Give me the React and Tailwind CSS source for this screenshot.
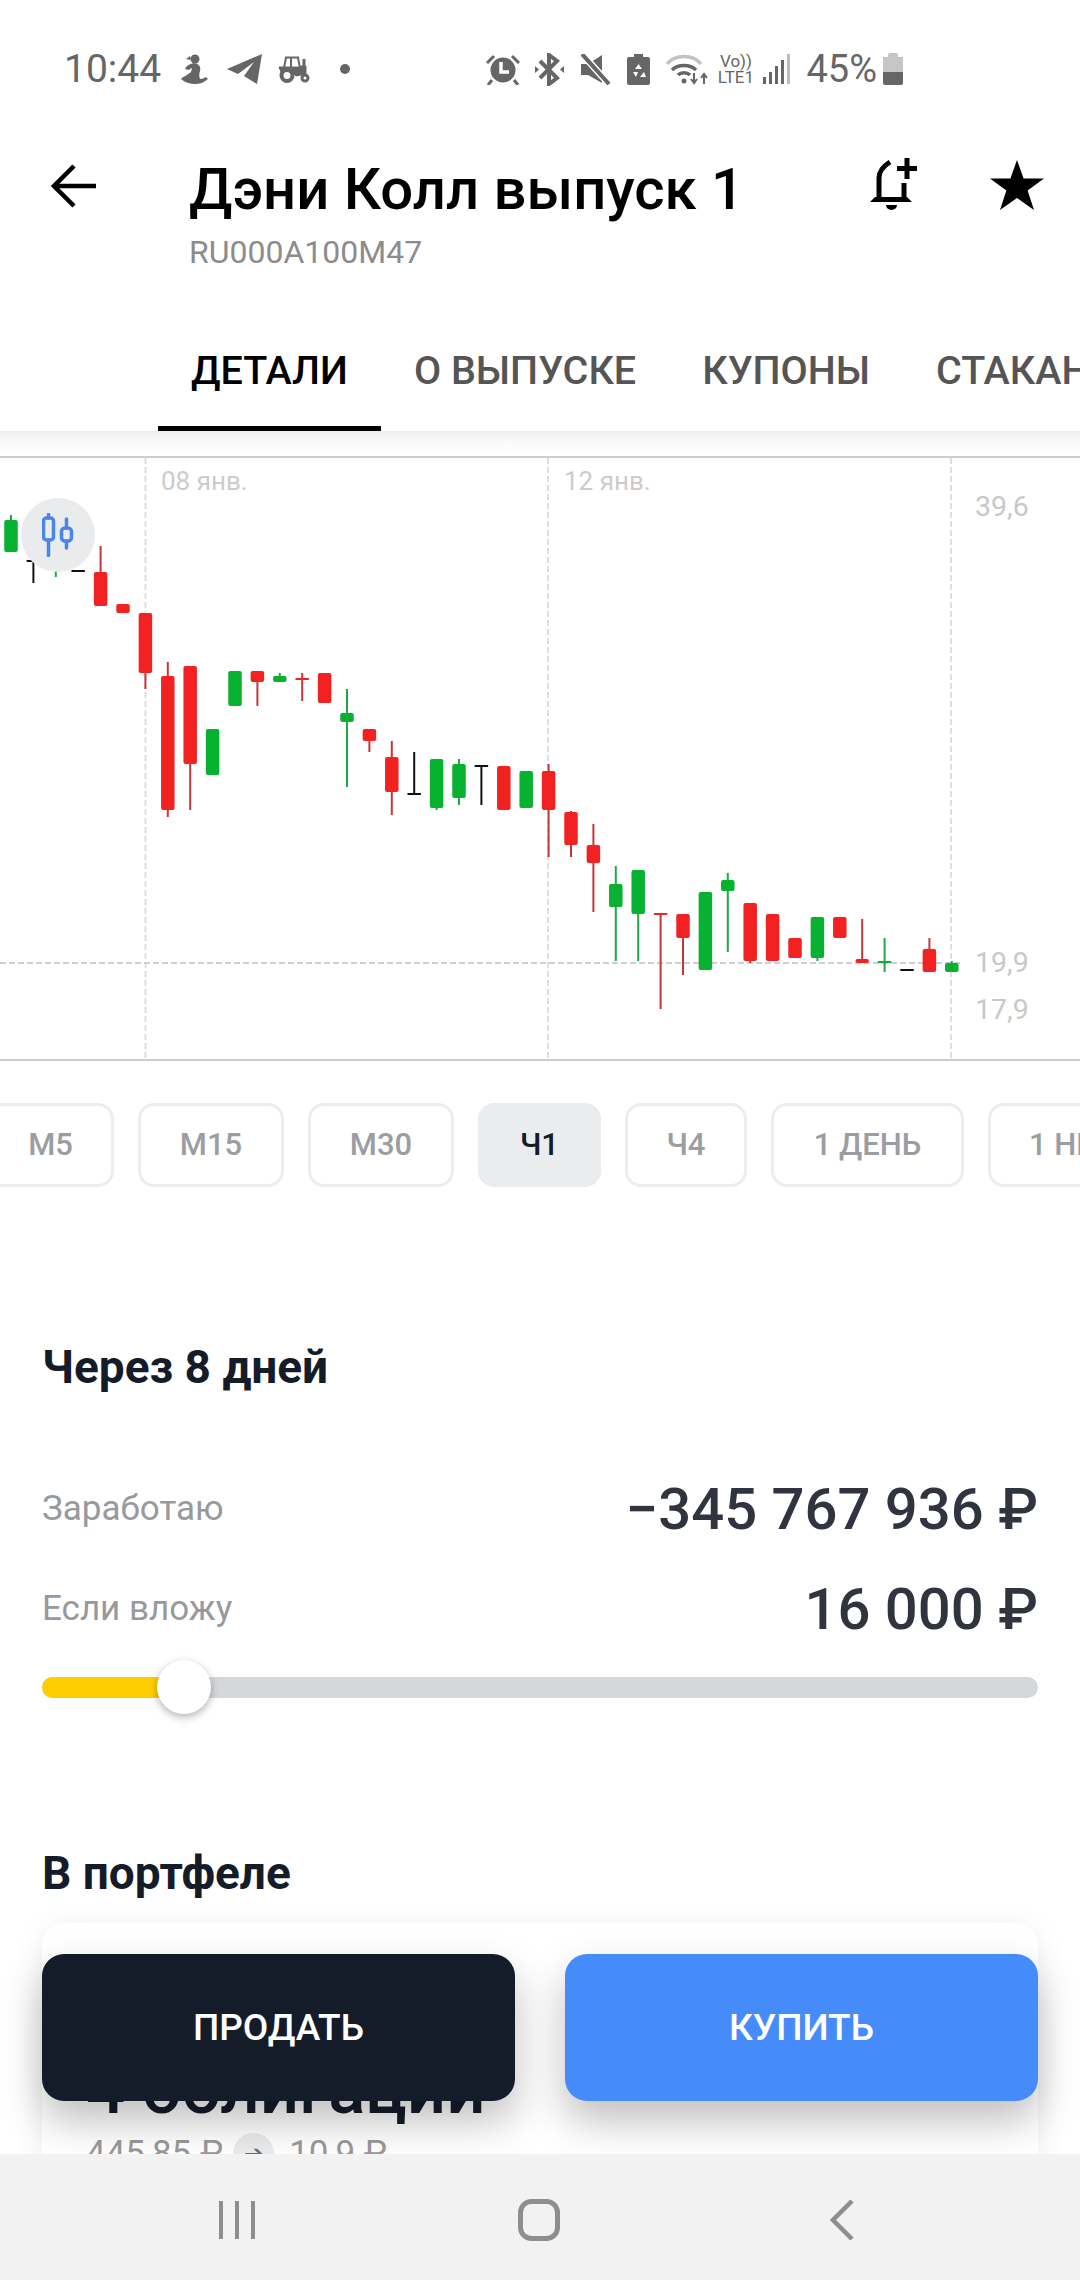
const CANDLE_STEP = 22.4
const CANDLE_W = 13.5
const COLORS = {
  r: { body: '#f22222', wick: '#c4363a' },
  g: { body: '#06b22f', wick: '#21a648' },
  k: { body: '#111111', wick: '#111111' },
}
// color, wick top, body top, body bottom, wick bottom (page y)
const CANDLES = [
  ['g', 515, 520, 552, 552],
  ['k', 545, 560, 562, 583],
  ['g', 540, 545, 570, 577],
  ['k', 570, 570, 572, 572],
  ['r', 546, 572, 606, 606],
  ['r', 604, 604, 613, 613],
  ['r', 613, 613, 673, 689],
  ['r', 662, 676, 810, 817],
  ['r', 666, 666, 764, 810],
  ['g', 729, 729, 775, 775],
  ['g', 671, 671, 706, 706],
  ['r', 671, 671, 682, 706],
  ['g', 673, 676, 682, 682],
  ['r', 673, 678, 680, 701],
  ['r', 673, 673, 703, 703],
  ['g', 689, 713, 722, 787],
  ['r', 729, 729, 741, 752],
  ['r', 741, 757, 792, 815],
  ['k', 752, 793, 795, 795],
  ['g', 759, 759, 808, 810],
  ['g', 759, 764, 798, 805],
  ['k', 765, 765, 767, 805],
  ['r', 766, 766, 810, 810],
  ['g', 771, 771, 808, 808],
  ['r', 764, 771, 810, 857],
  ['r', 811, 812, 845, 857],
  ['r', 824, 845, 863, 912],
  ['g', 866, 884, 907, 961],
  ['g', 870, 870, 914, 961],
  ['r', 913, 913, 915, 1009],
  ['r', 914, 914, 938, 975],
  ['g', 892, 892, 970, 970],
  ['g', 873, 880, 891, 952],
  ['r', 903, 903, 961, 963],
  ['r', 914, 914, 961, 961],
  ['r', 938, 938, 958, 958],
  ['g', 917, 917, 958, 961],
  ['r', 917, 917, 938, 938],
  ['r', 919, 959, 963, 963],
  ['g', 938, 961, 963, 972],
  ['k', 969, 969, 971, 971],
  ['r', 938, 949, 972, 972],
  ['g', 961, 963, 972, 972],
]
const TIMEFRAMES = [
  { label: 'М5', width: 'w-[127px]' },
  { label: 'М15', width: 'w-[146px]' },
  { label: 'М30', width: 'w-[146px]' },
  { label: 'Ч1', width: 'w-[123px]', active: true },
  { label: 'Ч4', width: 'w-[122px]' },
  { label: '1 ДЕНЬ', width: 'w-[193px]' },
  { label: '1 НЕД', width: 'w-[170px]' },
]
const TABS = ['ДЕТАЛИ', 'О ВЫПУСКЕ', 'КУПОНЫ', 'СТАКАН']

function StatusIcons() {
  return (
    <div className="flex items-center">
      <svg width="27" height="30" viewBox="0 0 27 30" fill="#666" className="ml-[20px]">
        <circle cx="14" cy="5" r="4.5" />
        <path d="M9 2 5 5l5 1z" />
        <path d="M13 9C8 10 5 12 4 15l4 1c1-1 2-2 3-2l-1 4C7 21 1 23 0 25c3 3 9 5 15 5 6 0 9-3 12-5l-2-2c-2 1-4 2-6 2-1-3-1-5 0-8 1-3 0-7-6-8z" />
      </svg>
      <svg width="35" height="30" viewBox="0 0 35 30" fill="#666" className="ml-[19px]">
        <path d="M35 0 0 15l11 5L27 8 17 22l13 8z" />
      </svg>
      <svg width="33" height="27" viewBox="0 0 33 27" fill="none" stroke="#666" className="ml-[16px]">
        <path d="M6 12 8 1.5h12l2 10.5" strokeWidth="2" />
        <path d="M13 1.5V12" strokeWidth="2" />
        <path d="M1 11h21l1-1h5v8l-10 2-3-3-12-1z" fill="#666" strokeWidth="1" />
        <path d="M26 3v8" strokeWidth="3" />
        <circle cx="9" cy="19.5" r="5.5" fill="#fff" strokeWidth="4" />
        <circle cx="27" cy="22" r="3" fill="#fff" strokeWidth="3" />
      </svg>
      <span className="ml-[29px] h-[10px] w-[10px] rounded-full bg-[#666]" />
    </div>
  )
}

function SystemIcons() {
  return (
    <div className="flex items-center text-[#666]">
      <svg width="34" height="31" viewBox="0 0 34 31">
        <circle cx="17" cy="16" r="12.5" fill="#666" />
        <path d="M15 8v10h8" fill="none" stroke="#fff" strokeWidth="3.5" />
        <path d="M1 9 8 2M33 9l-7-7M6 26l-4 5M28 26l4 5" stroke="#666" strokeWidth="3" />
      </svg>
      <svg width="29" height="33" viewBox="0 0 29 33" className="ml-[15px]">
        <path d="M5 8l17 17-8 6V2l8 6L5 25" fill="none" stroke="#666" strokeWidth="4" />
        <path d="M0 13l4 3.5L0 20zM29 13l-4 3.5 4 3.5z" fill="#666" />
      </svg>
      <svg width="30" height="31" viewBox="0 0 30 31" className="ml-[17px]">
        <path d="M0 10h7l14-9v28l-14-8H0z" fill="#666" />
        <path d="M1 0l27 30" stroke="#fff" strokeWidth="7" />
        <path d="M1 0l27 30" stroke="#666" strokeWidth="4" />
      </svg>
      <svg width="23" height="31" viewBox="0 0 23 31" className="ml-[16px]">
        <path d="M7 0h9v3h5a2 2 0 0 1 2 2v24a2 2 0 0 1-2 2H2a2 2 0 0 1-2-2V5a2 2 0 0 1 2-2h5z" fill="#666" />
        <path d="M11.5 10l3.500 5h-7zM6 18h5l-2 5zM17 18l2 5h-6z" fill="#fff" />
      </svg>
      <svg width="43" height="33" viewBox="0 0 43 33" fill="none" className="ml-[16px]">
        <path d="M1 11C9 1 27 1 35 11" stroke="#c2c2c2" strokeWidth="3.5" />
        <path d="M6 17c6-6 18-6 24 0" stroke="#666" strokeWidth="3.5" />
        <path d="M12 22c3-3 9-3 12 0" stroke="#666" strokeWidth="3.5" />
        <circle cx="18" cy="28" r="2.500" fill="#666" />
        <path d="M28 20v10M25 26l3 4 3-4M38 31V21M35 25l3-4 3 4" stroke="#666" strokeWidth="2" />
      </svg>
      <div className="ml-[6px] flex w-[41px] flex-col items-center text-[17px] leading-[16px]">
        <span>Vo))</span>
        <span>LTE1</span>
      </div>
      <svg width="27" height="30" viewBox="0 0 27 30" fill="#666" className="ml-[7px]">
        <rect x="0" y="23" width="3" height="7" />
        <rect x="6" y="18" width="3" height="12" />
        <rect x="12" y="12" width="3" height="18" />
        <rect x="18" y="6" width="3" height="24" />
        <rect x="24" y="0" width="3" height="30" fill="#bdbdbd" />
      </svg>
      <span className="ml-[16px] text-[38px] leading-none">45%</span>
      <div className="ml-[6px] flex h-[32px] w-[20px] flex-col items-center">
        <div className="h-[4px] w-[10px] rounded-t-[2px] bg-[#c6c6c6]" />
        <div className="h-[15px] w-full bg-[#c6c6c6]" />
        <div className="h-[13px] w-full rounded-b-[2px] bg-[#666]" />
      </div>
    </div>
  )
}

function Chart() {
  return (
    <div className="relative h-[605px] overflow-hidden border-y-2 border-[#cdcdcd]">
      <svg width="1080" height="601" viewBox="0 458 1080 601" className="block">
        {[145.5, 548, 951].map((x) => (
          <line key={x} x1={x} x2={x} y1="458" y2="1060" stroke="#dfdfdf" strokeWidth="2" strokeDasharray="6 3" />
        ))}
        <line x1="0" x2="960" y1="963" y2="963" stroke="#cfcfcf" strokeWidth="2" strokeDasharray="6 3" />
        {CANDLES.map(([c, wickTop, bodyTop, bodyBottom, wickBottom], i) => {
          const x = 11 + i * CANDLE_STEP
          return (
            <g key={i}>
              <line x1={x} x2={x} y1={wickTop} y2={wickBottom} stroke={COLORS[c].wick} strokeWidth="2" />
              <rect
                x={x - CANDLE_W / 2}
                y={bodyTop}
                width={CANDLE_W}
                height={bodyBottom - bodyTop}
                rx={bodyBottom - bodyTop > 3 ? 2 : 0.5}
                fill={COLORS[c].body}
              />
            </g>
          )
        })}
      </svg>
      <span className="absolute left-[161px] top-[7px] text-[26px] leading-[32px] text-[#cccccc]">08 янв.</span>
      <span className="absolute left-[564px] top-[7px] text-[26px] leading-[32px] text-[#cccccc]">12 янв.</span>
      <span className="absolute left-[975px] top-[32px] text-[28.5px] leading-[34px] text-[#c8c8c8]">39,6</span>
      <span className="absolute left-[975px] top-[488px] text-[28.5px] leading-[34px] text-[#c8c8c8]">19,9</span>
      <span className="absolute left-[975px] top-[535px] text-[28.5px] leading-[34px] text-[#c8c8c8]">17,9</span>
      <div className="absolute left-[21px] top-[40px] flex h-[74px] w-[74px] items-center justify-center rounded-full bg-[#e9ebec]">
        <svg width="32" height="44" viewBox="0 0 32 44" fill="none" stroke="#4a86ea" strokeWidth="3.5" strokeLinecap="round">
          <path d="M6.500 1.500V5M6.500 27v15.500M24.500 6v9M24.500 28v7" />
          <rect x="1.500" y="5" width="10" height="22" rx="3" />
          <rect x="19.500" y="15" width="10" height="13" rx="3.500" />
        </svg>
      </div>
    </div>
  )
}

export default function App() {
  return (
    <div className="relative h-[2280px] w-[1080px] overflow-hidden bg-white font-['Roboto',sans-serif]">
      {/* status bar */}
      <div className="flex h-[136px] items-center justify-between pl-[64px] pr-[177px] pt-[2px] text-[#666]">
        <div className="flex items-center">
          <span className="text-[39px] leading-none">10:44</span>
          <StatusIcons />
        </div>
        <SystemIcons />
      </div>

      {/* header */}
      <div className="flex h-[175px] items-start">
        <svg width="46" height="44" viewBox="0 0 46 44" fill="none" stroke="#000" strokeWidth="4.5" className="ml-[51px] mt-[28px]">
          <path d="M45 22H3M23 2 3 22l20 20" />
        </svg>
        <div className="ml-[92px] w-[620px] pt-[19px]">
          <h1 className="text-[58px] font-medium leading-[68px] text-black">Дэни Колл выпуск 1</h1>
          <p className="mt-[11px] text-[32px] leading-[36px] text-[#8c8c8c]">RU000A100M47</p>
        </div>
        <svg width="48" height="52" viewBox="0 0 48 52" fill="none" stroke="#000" strokeWidth="5" className="ml-[61px] mt-[22px]">
          <path d="M20 4C12 9 9 14 9 20v21M34 25v16" />
          <path d="M0 44l5-5h32l5 5z" fill="#000" stroke="none" />
          <path d="M16 47h11a5.500 5 0 0 1-11 0z" fill="#000" stroke="none" />
          <path d="M37 0v21M27 10.500h20" />
        </svg>
        <svg width="54" height="50" viewBox="0 0 54 50" fill="#000" className="ml-[72px] mt-[24px]">
          <path d="M27 0l6.600 18.600H54L37.600 30.400 44 50 27 38 10 50l6.400-19.600L0 18.600h20.400z" />
        </svg>
      </div>

      {/* tabs */}
      <div className="relative flex h-[120px] overflow-hidden pl-[158px]">
        {TABS.map((tab, i) => (
          <div
            key={tab}
            className={
              i === 0
                ? 'flex shrink-0 items-center border-b-[5px] border-black px-[33px] pt-[5px] text-[39.5px] font-medium text-black'
                : 'flex shrink-0 items-center border-b-[5px] border-transparent px-[33px] pt-[5px] text-[39.5px] font-medium text-[#555555]'
            }
          >
            {tab}
          </div>
        ))}
      </div>

      <div className="h-[25px] border-t border-[#ececec] bg-gradient-to-b from-[#efefef] via-[#fbfbfb] to-white" />
      <Chart />

      {/* timeframes */}
      <div className="mt-[42px] flex gap-[24px] -ml-[13px]">
        {TIMEFRAMES.map(({ label, width, active }) => (
          <div
            key={label}
            className={
              active
                ? `flex h-[84px] shrink-0 items-center justify-center rounded-[16px] bg-[#eaecee] text-[31px] font-medium text-[#141c2a] ${width}`
                : `flex h-[84px] shrink-0 items-center justify-center rounded-[16px] border-[3px] border-[#ebedef] text-[31px] font-medium text-[#9a9ea3] ${width}`
            }
          >
            {label}
          </div>
        ))}
      </div>

      {/* profit calculator */}
      <div className="px-[42px]">
        <h2 className="mt-[154px] text-[46px] font-bold leading-[52px] text-[#141c2a]">Через 8 дней</h2>
        <div className="mt-[66px] flex h-[100px] items-center justify-between">
          <span className="text-[35px] text-[#97999c]">Заработаю</span>
          <span className="text-[58px] font-medium text-[#30343f]">−345 767 936 ₽</span>
        </div>
        <div className="flex h-[100px] items-center justify-between">
          <span className="text-[35px] text-[#97999c]">Если вложу</span>
          <span className="text-[58px] font-medium text-[#30343f]">16 000 ₽</span>
        </div>
        <div className="relative mt-[18px] h-[21px] rounded-full bg-[#d4d8da]">
          <div className="h-full w-[130px] rounded-full bg-[#ffce00]" />
          <div className="absolute left-[115px] top-[-17px] h-[54px] w-[54px] rounded-full bg-white shadow-[0_3px_8px_rgba(0,0,0,0.3)]" />
        </div>
        <h2 className="mt-[149px] text-[46px] font-bold leading-[52px] text-[#141c2a]">В портфеле</h2>
        <div className="mt-[24px] h-[400px] rounded-[22px] bg-white px-[44px] pt-[127px] shadow-[0_4px_30px_rgba(0,0,0,0.07)]">
          <div className="text-[69px] font-medium leading-[80px] text-[#141c2a]">4 облигации</div>
          <div className="mt-[3px] flex items-center text-[35px] leading-[40px] text-[#999999]">
            <span>445,85 ₽</span>
            <span className="ml-[10px] flex h-[41px] w-[41px] items-center justify-center rounded-full bg-[#e9ebec] text-[24px] text-[#6a7078]">➔</span>
            <span className="ml-[15px]">10,9 ₽</span>
          </div>
        </div>
      </div>

      {/* buy / sell */}
      <div className="absolute bottom-[179px] left-[42px] right-[42px] flex gap-[50px]">
        <div className="flex h-[147px] flex-1 items-center justify-center rounded-[22px] bg-[#141c2a] text-[37px] font-medium text-white shadow-[0_20px_40px_rgba(0,0,0,0.25)]">
          ПРОДАТЬ
        </div>
        <div className="flex h-[147px] flex-1 items-center justify-center rounded-[22px] bg-[#458bf9] text-[37px] font-medium text-white shadow-[0_20px_40px_rgba(0,0,0,0.25)]">
          КУПИТЬ
        </div>
      </div>

      {/* android nav */}
      <div className="absolute inset-x-0 bottom-0 flex h-[126px] items-center bg-[#f2f2f2] pt-[6px]">
        <svg width="38" height="40" viewBox="0 0 38 40" fill="none" stroke="#8e8e8e" strokeWidth="4" className="ml-[218px]">
          <path d="M3 1v38M19 1v38M35 1v38" />
        </svg>
        <svg width="42" height="42" viewBox="0 0 42 42" fill="none" stroke="#8e8e8e" strokeWidth="5" className="ml-[262px]">
          <rect x="2.500" y="2.500" width="37" height="37" rx="11" />
        </svg>
        <svg width="24" height="40" viewBox="0 0 24 40" fill="none" stroke="#8e8e8e" strokeWidth="4.500" className="ml-[270px]">
          <path d="M22 1 3 20l19 19" />
        </svg>
      </div>
    </div>
  )
}
